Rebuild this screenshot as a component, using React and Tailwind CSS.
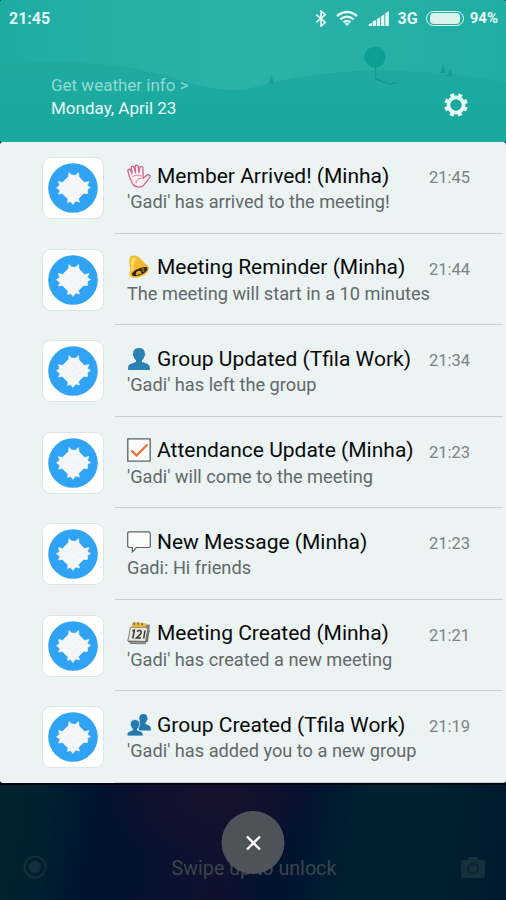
import React from "react";

const notifications = [
  { icon: HandIcon, title: "Member Arrived! (Minha)", text: "'Gadi' has arrived to the meeting!", time: "21:45" },
  { icon: BellIcon, title: "Meeting Reminder (Minha)", text: "The meeting will start in a 10 minutes", time: "21:44" },
  { icon: PersonIcon, title: "Group Updated (Tfila Work)", text: "'Gadi' has left the group", time: "21:34" },
  { icon: CheckIcon, title: "Attendance Update (Minha)", text: "'Gadi' will come to the meeting", time: "21:23" },
  { icon: MessageIcon, title: "New Message (Minha)", text: "Gadi: Hi friends", time: "21:23" },
  { icon: CalendarIcon, title: "Meeting Created (Minha)", text: "'Gadi' has created a new meeting", time: "21:21" },
  { icon: PeopleIcon, title: "Group Created (Tfila Work)", text: "'Gadi' has added you to a new group", time: "21:19" },
];

function HandIcon() {
  return (
    <svg viewBox="0 0 24 24" className="h-6 w-6" fill="#fbeef2" stroke="#d0648a" strokeWidth="1.3" strokeLinejoin="round" strokeLinecap="round">
      <path d="M5.500 19.500C3 15 1.500 11 .9 7c-.3-2 2-2.400 2.700-.8L5 9.500 4.300 4c-.2-2 2.300-2.500 2.800-.5L8.500 8.500 8.200 2.800c0-2.100 2.700-2.200 3-.2l.7 5.900.9-5C13.200 1.700 16 2 15.900 4l.3 10.500 3.500-3.200c1.600-1.300 4.200.1 3.200 1.700-2 3-3.900 5.500-6.400 8.500-3 2.500-9.500 2-11-2Z" />
      <path d="M6 12.500c2.500-1.800 6-2 8.500-.5M9 19c0-2.800 2-4.500 5-4.700" fill="none" strokeWidth=".8" />
    </svg>
  );
}

function BellIcon() {
  return (
    <svg viewBox="0 0 24 24" className="h-6 w-6">
      <path d="M3.500 1.500c2-1.700 5.300-1.300 7.800.4 4 2.700 5.300 6.400 10.300 9.100.9 3.700-1 7.300-4.700 9.300-4.500 2.500-9.400 3.400-12.700 1.800-2-1-2-2.500-1.400-4.600C4 12 .9 5.500 3.500 1.500Z" fill="#f5b82d" />
      <path d="M5 3c2-1 4 0 5 1-3 2-3.700 7-3.500 11L4.200 17C5.300 12 3 6.500 5 3Z" fill="#ffdc68" />
      <path d="M5 19.500c.3-3 5-5.500 9-6.700 3.600-1.100 6.100-1.100 6.500.2.500 2.200-2.300 5-6.200 6.600-4.500 2-9.100 2.200-9.300-.1Z" fill="#29251d" />
      <path d="M9 20.300c-.8-2 .5-4 2.400-4.500 2-.5 3.200.8 3 3Z" fill="#e6aa2c" />
      <path d="m14 13.500 3-1 .7 4-2 1Z" fill="#85601f" />
    </svg>
  );
}

function PersonIcon() {
  return (
    <svg viewBox="0 0 24 24" className="h-6 w-6" fill="#2d80b3">
      <path d="M12 1c3.700 0 6 2.200 5.800 5.500.9.500.4 2.400-.5 3-.5 2-1.200 3-2.300 3.700V15c2.500 1 7 1.800 7.700 4.300l.3 3.700H1l.3-3.700C2 16.800 6.500 16 9 15v-1.800C7.900 12.500 7.200 11.500 6.700 9.500c-.9-.6-1.400-2.500-.5-3C6 3.200 8.300 1 12 1Z" />
    </svg>
  );
}

function CheckIcon() {
  return (
    <svg viewBox="0 0 24 24" className="h-6 w-6" fill="none">
      <path d="M.8.8h22.400v22.400H.8z" fill="#fafbfb" stroke="#5d6060" strokeWidth="1.3" />
      <path d="m4.500 12.500 5 5L20.500 6.500" stroke="#ee6d2c" strokeWidth="2.2" />
    </svg>
  );
}

function MessageIcon() {
  return (
    <svg viewBox="0 0 24 24" className="h-6 w-6">
      <path d="M2.500 1.800h19c1.200 0 1.800.6 1.800 1.700v12.300c0 1.100-.6 1.700-1.700 1.700H9.200L5.300 22v-4.500H2.500c-1.200 0-1.800-.6-1.800-1.700V3.500c0-1.100.6-1.700 1.800-1.700Z" fill="#fafcfc" stroke="#5e6161" strokeWidth="1.2" />
    </svg>
  );
}

function CalendarIcon() {
  return (
    <svg viewBox="0 0 24 24" className="h-6 w-6">
      <path d="m5.500 3 17.500.7-2 17.300-19 .8Z" fill="#858684" />
      <path d="m3.500 6 17.500.8-2.500 13.700L.8 20Z" fill="#e6e6e0" stroke="#696a67" strokeWidth=".8" />
      <path d="m5.500 1.500 13.700.7-.6 4.600-14-.8Z" fill="#e5b83a" />
      <path d="m7 1 .3 3M11 1l.2 3M15 1.500l.2 3" stroke="#58533b" />
      <path d="m5.500 10 1.800-.8-1.500 8.300M10 10.500c2-2 5-1 4 1.500-.7 2-3 3.200-4.600 5h4.600M18 9.500l-1.300 8" fill="none" stroke="#363735" strokeWidth="1.5" />
      <path d="m1 20.500 18 .8 3.500-12M3 22.500l16 .2" fill="none" stroke="#606160" strokeWidth=".9" />
    </svg>
  );
}

function PeopleIcon() {
  return (
    <svg viewBox="0 0 24 24" className="h-6 w-6" fill="#2279ae">
      <path d="M16.300 1c2.700 0 4.300 1.600 4 4.100.8.300.3 1.900-.4 2.200-.3 1.300-.8 2-1.500 2.600v1.200c1.800.8 4.300 1.400 5.200 3.200l.4 3.200H12L11 9c1.300-.8 1.700-1.500 2-2-.9-.5-1.200-1.800-.6-2C12.200 2.600 13.800 1 16.300 1Z" />
      <path d="M8 6.500c2.900 0 4.700 1.700 4.500 4.300.8.400.3 2-.5 2.400-.3 1.400-.9 2.200-1.600 2.700v1.200c2 .8 5 1.500 5.500 3.400l.3 2.500H0l.2-2.500c.5-1.900 3.500-2.600 5.400-3.400v-1.200c-.7-.5-1.300-1.300-1.600-2.700-.8-.4-1.300-2-.5-2.400C3.300 8.200 5.100 6.500 8 6.500Z" stroke="#ebf3f3" strokeWidth=".8" />
    </svg>
  );
}

function AppLogo() {
  return (
    <div className="flex h-[62px] w-[62px] shrink-0 items-center justify-center rounded-[9px] border border-[#e0e6e6] bg-white">
      <svg viewBox="0 0 50 50" className="h-[50px] w-[50px]">
        <circle cx="25" cy="25" r="24.8" fill="#31a3f5" />
        <path
          d="M21 9.500 23.500 12 27.500 12.300 30.500 9.500 31 14 36.500 19.500 41 18.500 39.300 22.500 42.500 24.500 39.500 26.500 39.500 30.500 35.500 30.500 30.500 35.500 31.500 39 27.500 38 25 41.500 22.500 38.500 19.500 39.500 20 36 14.300 30.500 10.500 31 12 27.500 8.500 24.800 11.500 22.500 10.500 18.500 14.500 19.500 20.500 13.500Z"
          fill="#f5f6f7"
          stroke="#f5f6f7"
          strokeWidth=".6"
          strokeLinejoin="round"
        />
        <path d="m21 28 8-6M25 31l7-5" stroke="#ebedee" strokeWidth=".8" />
      </svg>
    </div>
  );
}

function Scenery() {
  return (
    <svg viewBox="0 0 506 142" className="absolute inset-0 h-full w-full">
      <defs>
        <linearGradient id="sky" x1="0" x2="1" y1="0" y2="0">
          <stop offset="0" stopColor="#1eaca2" />
          <stop offset=".5" stopColor="#2bb2a8" />
          <stop offset="1" stopColor="#20ada4" />
        </linearGradient>
        <linearGradient id="hill" x1="0" x2="0" y1="0" y2="1">
          <stop offset="0" stopColor="#1faaa0" />
          <stop offset="1" stopColor="#19a99f" />
        </linearGradient>
      </defs>
      <path fill="url(#sky)" d="M0 0h506v142H0z" />
      <path fill="url(#hill)" d="M0 64c50-4 105-2 150 8 30 7 55 18 83 18 10 0 18-2 26-4 70-19 145-21 247-4v60H0Z" />
      <circle cx="375" cy="57" r="10.5" fill="#0ca094" />
      <path d="M375.500 66v13l14 5c2 1 4-2 7-1" fill="none" stroke="#159689" strokeWidth="1.3" />
      <path d="m268 84 3.500-9 3 9ZM440 73l3-9 3 9ZM447 76l3-8 3 9Z" fill="#179f94" />
    </svg>
  );
}

function StatusBar() {
  return (
    <div className="relative flex h-[37px] items-center justify-between pr-2 pl-[9px] text-[#e4f8f4]">
      <span className="text-[16px] font-bold">21:45</span>
      <div className="flex items-center">
        <svg viewBox="0 0 12 18" className="mr-[9px] h-[17px] w-3" fill="none" stroke="currentColor" strokeWidth="1.8">
          <path d="m1 5 9.500 8L6 17V1l4.500 4L1 13" />
        </svg>
        <svg viewBox="0 0 22 17" className="mr-[10px] h-[17px] w-[22px]" fill="none" stroke="currentColor" strokeWidth="2.3">
          <path d="M1 6.200c5.800-5.600 14.200-5.600 20 0M4.300 9.400c4-3.800 9.400-3.800 13.400 0M7.500 12.500c2-2 5-2 7 0" />
          <path d="M8.700 13.700c1.400-1.200 3.200-1.200 4.600 0L11 16Z" fill="currentColor" stroke="none" />
        </svg>
        <svg viewBox="0 0 22 16" className="mr-[8px] h-[15px] w-[22px]" fill="currentColor">
          <path d="M0 16v-2l3.700-1.500V16ZM4.300 16v-5l3.500-1.500V16ZM8.700 16V8.500l3.500-1.800V16ZM13.200 16V5.500l3.500-2V16ZM17.700 16V2.500L21.500 0v16Z" />
        </svg>
        <span className="mr-[8px] text-[16px] font-bold">3G</span>
        <div className="mr-[6px] h-[15px] w-[38px] rounded-full border border-current p-[1px]">
          <div className="ml-[2px] h-full w-[30px] rounded-[4px] bg-[#daf3ee]" />
        </div>
        <span className="text-[15px] font-bold">94%</span>
      </div>
    </div>
  );
}

function GearIcon() {
  return (
    <svg viewBox="-12 -12 24 24" className="h-6 w-6" fill="none" stroke="#e8faf6">
      <circle r="7.6" strokeWidth="3.8" />
      <circle r="10.3" strokeWidth="3" strokeDasharray="4.1 3.99" strokeDashoffset="-2" />
    </svg>
  );
}

function Header() {
  return (
    <header className="relative h-[142px] overflow-hidden rounded-[3px] bg-[#1dada3]">
      <Scenery />
      <StatusBar />
      <div className="relative flex items-start justify-between pt-[37px] pr-[38px] pl-[51px]">
        <div className="text-[17px] leading-[23px]">
          <p className="text-[#90d9d1]">Get weather info &gt;</p>
          <p className="text-[#e8faf7]">Monday, April 23</p>
        </div>
        <button className="mt-[19px]" aria-label="Settings">
          <GearIcon />
        </button>
      </div>
    </header>
  );
}

function Notification({ item }) {
  const Icon = item.icon;
  return (
    <div className="flex min-h-0 flex-1 pl-[42px]">
      <div className="pt-[15px] pr-[11px]">
        <AppLogo />
      </div>
      <div className="mr-[3px] flex flex-1 justify-between border-b border-[#c8cfcf] pr-[33px] pl-3">
        <div className="pt-[21px] whitespace-nowrap">
          <div className="flex h-[25px] items-center gap-1.5">
            <Icon />
            <h2 className="pt-px text-[21px] leading-[25px] text-[#080a0a]">{item.title}</h2>
          </div>
          <p className="text-[18.2px] leading-[27px] text-[#626969]">{item.text}</p>
        </div>
        <time className="w-0 pt-[24px]">
          <span className="float-right text-[16.5px] leading-[23px] text-[#7c8383]">{item.time}</span>
        </time>
      </div>
    </div>
  );
}

function LockScreen() {
  return (
    <footer className="relative h-[117px] border-t-2 border-[#010611] bg-[linear-gradient(100deg,#00242b_0%,#002130_9%,#00132f_20%,#07122f_33%,#0e112e_45%,#00132f_57%,#002130_70%,#002130_84%,#00192d_100%)]">
      <div className="h-full bg-[radial-gradient(ellipse_130px_70px_at_215px_10px,#17112d,transparent)]">
        <div className="flex h-full items-end justify-between px-[23px] pb-[21px]">
          <svg viewBox="0 0 24 24" className="h-6 w-6" fill="none" stroke="#122e38" strokeWidth="2">
            <circle cx="12" cy="12" r="10.5" />
            <circle cx="12" cy="12" r="6" fill="#16303a" stroke="none" />
          </svg>
          <span className="-mb-0.5 text-[19.7px] leading-6 text-[#3d444b]">Swipe up to unlock</span>
          <svg viewBox="0 0 24 21" className="mr-[-2px] mb-px h-[21px] w-6">
            <path d="M8 0h8l2 3h4q2 0 2 2v14q0 2-2 2H2q-2 0-2-2V5q0-2 2-2h4Z" fill="#172f3b" />
            <circle cx="12" cy="11.5" r="5" fill="#172f3b" stroke="#0a2532" strokeWidth="2" />
          </svg>
        </div>
      </div>
      <button className="absolute top-[26px] left-1/2 flex h-[63px] w-[63px] -translate-x-1/2 items-center justify-center rounded-full bg-[#51565c]/97" aria-label="Close">
        <svg viewBox="0 0 16 16" className="h-4 w-4" stroke="#fff" strokeWidth="2.4">
          <path d="m1.500 1.500 13 13M14.500 1.500l-13 13" />
        </svg>
      </button>
    </footer>
  );
}

export default function App() {
  return (
    <div className="flex h-[900px] w-[506px] flex-col overflow-hidden bg-[#061d26] font-[Roboto,sans-serif]">
      <Header />
      <main className="flex h-[641px] flex-col rounded-[3px] bg-[#ebf3f3]">
        {notifications.map((item) => (
          <Notification key={item.title} item={item} />
        ))}
      </main>
      <LockScreen />
    </div>
  );
}
